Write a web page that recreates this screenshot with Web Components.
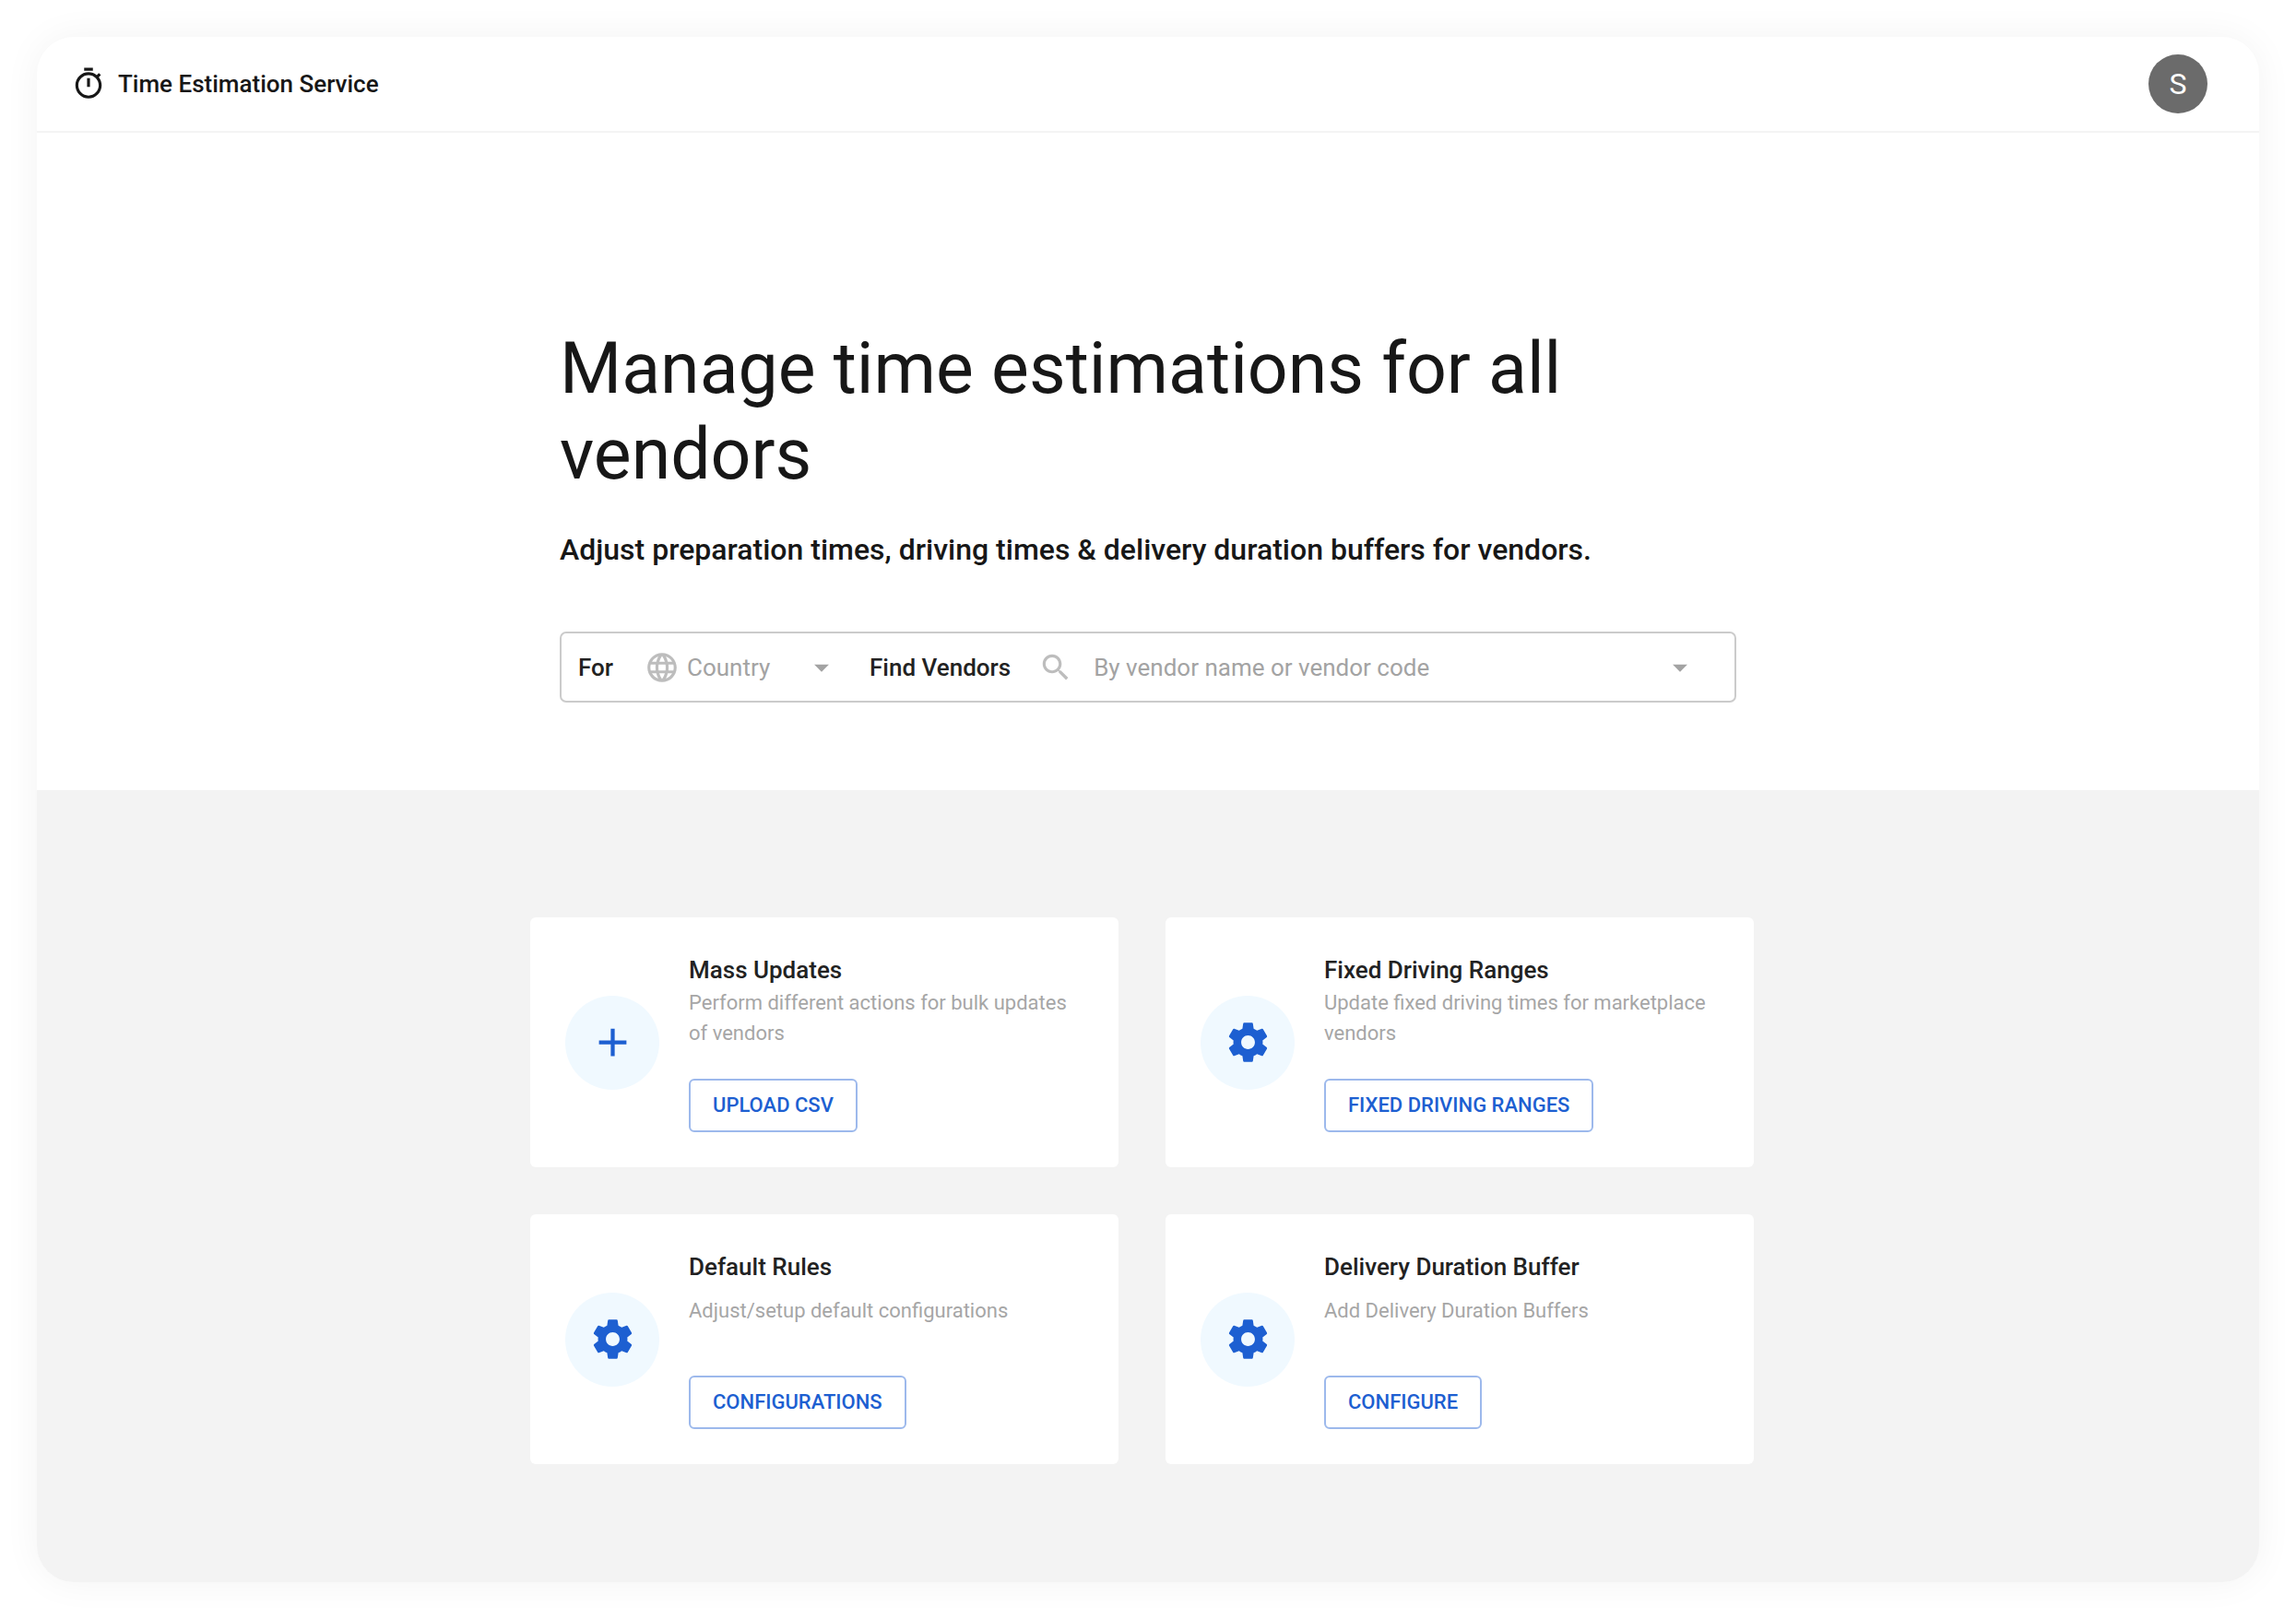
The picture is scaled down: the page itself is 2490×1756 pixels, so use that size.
<!DOCTYPE html>
<html lang="en">
<head>
<meta charset="utf-8">
<title>Time Estimation Service</title>
<style>
  html { background: #fff; }
  body {
    margin: 0;
    padding: 40px;
    font-family: Roboto, "Liberation Sans", sans-serif;
    font-size: 26px;
    color: #171717;
  }
</style>
</head>
<body>
<app-shell>
  <app-header slot="header" initial="S">Time Estimation Service</app-header>
  <hero-panel>
    <span slot="title">Manage time estimations for all vendors</span>
    <span slot="subtitle">Adjust preparation times, driving times &amp; delivery duration buffers for vendors.</span>
    <vendor-search></vendor-search>
  </hero-panel>
  <action-grid>
    <action-card icon="add" action="UPLOAD CSV">
      <span slot="title">Mass Updates</span>
      Perform different actions for bulk updates of vendors
    </action-card>
    <action-card icon="settings" action="FIXED DRIVING RANGES">
      <span slot="title">Fixed Driving Ranges</span>
      Update fixed driving times for marketplace vendors
    </action-card>
    <action-card icon="settings" action="CONFIGURATIONS" spaced>
      <span slot="title">Default Rules</span>
      Adjust/setup default configurations
    </action-card>
    <action-card icon="settings" action="CONFIGURE" spaced>
      <span slot="title">Delivery Duration Buffer</span>
      Add Delivery Duration Buffers
    </action-card>
  </action-grid>
</app-shell>

<script>
  const ICONS = {
    timer: 'M15 1H9v2h6V1zm-4 13h2V8h-2v6zm8.03-6.61l1.42-1.42c-.43-.51-.9-.99-1.41-1.41l-1.42 1.42C16.07 4.74 14.12 4 12 4c-4.97 0-9 4.03-9 9s4.02 9 9 9 9-4.03 9-9c0-2.12-.74-4.07-1.97-5.61zM12 20c-3.87 0-7-3.13-7-7s3.13-7 7-7 7 3.13 7 7-3.13 7-7 7z',
    globe: 'M11.99 2C6.47 2 2 6.48 2 12s4.47 10 9.99 10C17.52 22 22 17.52 22 12S17.52 2 11.99 2zm6.93 6h-2.95c-.32-1.25-.78-2.45-1.38-3.56 1.84.63 3.37 1.91 4.33 3.56zM12 4.04c.83 1.2 1.48 2.53 1.91 3.96h-3.82c.43-1.43 1.08-2.76 1.91-3.96zM4.26 14C4.1 13.36 4 12.69 4 12s.1-1.36.26-2h3.38c-.08.66-.14 1.32-.14 2s.06 1.34.14 2H4.26zm.82 2h2.95c.32 1.25.78 2.45 1.38 3.56-1.84-.63-3.37-1.9-4.33-3.56zm2.95-8H5.08c.96-1.66 2.49-2.93 4.33-3.56C8.81 5.55 8.35 6.75 8.03 8zM12 19.96c-.83-1.2-1.48-2.53-1.91-3.96h3.82c-.43 1.43-1.08 2.76-1.91 3.96zM14.34 14H9.66c-.09-.66-.16-1.32-.16-2s.07-1.35.16-2h4.68c.09.65.16 1.32.16 2s-.07 1.34-.16 2zm.25 5.56c.6-1.11 1.06-2.31 1.38-3.56h2.95c-.96 1.65-2.49 2.93-4.33 3.56zM16.36 14c.08-.66.14-1.32.14-2s-.06-1.34-.14-2h3.38c.16.64.26 1.31.26 2s-.1 1.36-.26 2h-3.38z',
    search: 'M15.5 14h-.79l-.28-.27C15.41 12.59 16 11.11 16 9.5 16 5.91 13.09 3 9.5 3S3 5.91 3 9.5 5.91 16 9.5 16c1.61 0 3.09-.59 4.23-1.57l.27.28v.79l5 4.99L20.49 19l-4.99-5zm-6 0C7.01 14 5 11.99 5 9.5S7.01 5 9.5 5 14 7.01 14 9.5 11.99 14 9.5 14z',
    dropdown: 'M7 10l5 5 5-5z',
    add: 'M19 13h-6v6h-2v-6H5v-2h6V5h2v6h6v2z',
    settings: 'M19.43 12.98c.04-.32.07-.64.07-.98s-.03-.66-.07-.98l2.11-1.65c.19-.15.24-.42.12-.64l-2-3.46c-.12-.22-.39-.3-.61-.22l-2.49 1c-.52-.4-1.08-.73-1.69-.98l-.38-2.65C14.46 2.18 14.25 2 14 2h-4c-.25 0-.46.18-.49.42l-.38 2.65c-.61.25-1.17.59-1.69.98l-2.49-1c-.23-.09-.49 0-.61.22l-2 3.46c-.13.22-.07.49.12.64l2.11 1.65c-.04.32-.07.65-.07.98s.03.66.07.98l-2.11 1.65c-.19.15-.24.42-.12.64l2 3.46c.12.22.39.3.61.22l2.49-1c.52.4 1.08.73 1.69.98l.38 2.65c.03.24.24.42.49.42h4c.25 0 .46-.18.49-.42l.38-2.65c.61-.25 1.17-.59 1.69-.98l2.49 1c.23.09.49 0 .61-.22l2-3.46c.12-.22.07-.49-.12-.64l-2.11-1.65zM12 15.5c-1.93 0-3.5-1.57-3.5-3.5s1.57-3.5 3.5-3.5 3.5 1.57 3.5 3.5-1.57 3.5-3.5 3.5z'
  };

  const define = (name, render) => customElements.define(name, class extends HTMLElement {
    constructor() {
      super();
      this.attachShadow({ mode: 'open' });
    }
    connectedCallback() {
      this.shadowRoot.innerHTML = render(this);
    }
  });

  define('md-icon', el => `
    <style>
      :host { display: block; flex: none; width: 38px; height: 38px; }
      svg { display: block; width: 100%; height: 100%; fill: currentColor; }
    </style>
    <svg viewBox="0 0 24 24" aria-hidden="true"><path d="${ICONS[el.getAttribute('name')]}"/></svg>`);

  define('app-shell', () => `
    <style>
      :host {
        display: flex;
        flex-direction: column;
        min-height: calc(100vh - 80px);
        border-radius: 40px;
        overflow: hidden;
        background: #fff;
        box-shadow: 0 0 40px rgba(0, 0, 0, .05);
      }
      main { flex: 1; display: flex; flex-direction: column; }
    </style>
    <slot name="header"></slot>
    <main><slot></slot></main>`);

  define('app-header', el => `
    <style>
      :host { display: block; border-bottom: 2px solid #f4f4f4; }
      header {
        display: flex;
        align-items: center;
        gap: 13px;
        padding: 19px 56px 19px 37px;
      }
      .name { flex: 1; font-weight: 500; line-height: 38px; }
      button {
        width: 64px;
        height: 64px;
        padding: 0;
        border: 0;
        border-radius: 50%;
        background: #6b6b6b;
        color: #fff;
        font: 400 32px/64px Roboto, "Liberation Sans", sans-serif;
      }
    </style>
    <header>
      <md-icon name="timer"></md-icon>
      <span class="name"><slot></slot></span>
      <button type="button" aria-label="Account">${el.getAttribute('initial')}</button>
    </header>`);

  define('hero-panel', () => `
    <style>
      :host { display: block; padding: 210px 40px 95px; }
      .content { max-width: 1276px; margin: 0 auto; }
      h1 { margin: 0 0 31px; font-weight: 400; font-size: 77px; line-height: 93px; }
      p { margin: 0 0 64px; font-weight: 500; font-size: 32px; line-height: 50px; }
    </style>
    <div class="content">
      <h1><slot name="title"></slot></h1>
      <p><slot name="subtitle"></slot></p>
      <slot></slot>
    </div>`);

  define('vendor-search', () => `
    <style>
      :host { display: block; }
      form {
        display: flex;
        align-items: center;
        box-sizing: border-box;
        height: 77px;
        padding: 0 40px 0 18px;
        border: 2px solid #cbcbcb;
        border-radius: 7px;
      }
      label { flex: none; font-weight: 500; line-height: 38px; color: #222; white-space: nowrap; }
      .field { display: flex; align-items: center; color: #bdbdbd; }
      .country { flex: none; gap: 8px; margin: 0 33px 0 34px; }
      .vendor { flex: 1; gap: 22px; margin-left: 30px; min-width: 0; }
      .select { display: grid; grid-template-columns: 127px 38px; align-items: center; }
      select { grid-area: 1 / 1 / 2 / 3; appearance: none; }
      .select md-icon { grid-area: 1 / 2; pointer-events: none; }
      select, input {
        width: 100%;
        height: 38px;
        min-width: 0;
        margin: 0;
        padding: 0;
        border: 0;
        outline: 0;
        background: none;
        color: #a3a3a3;
        font: inherit;
      }
      input { flex: 1; }
      input::placeholder { color: #a3a3a3; opacity: 1; }
      button { flex: none; padding: 0; border: 0; background: none; color: inherit; }
      .arrow { color: #a3a3a3; }
    </style>
    <form>
      <label for="country">For</label>
      <div class="field country">
        <md-icon name="globe"></md-icon>
        <div class="select">
          <select id="country"><option>Country</option></select>
          <md-icon class="arrow" name="dropdown"></md-icon>
        </div>
      </div>
      <label for="vendor">Find Vendors</label>
      <div class="field vendor">
        <md-icon name="search"></md-icon>
        <input id="vendor" type="text" placeholder="By vendor name or vendor code">
        <button type="button" class="arrow" aria-label="Show vendors"><md-icon name="dropdown"></md-icon></button>
      </div>
    </form>`);

  define('action-grid', () => `
    <style>
      :host { display: block; flex: 1; padding: 138px 40px 128px; background: #f3f3f3; }
      .grid {
        display: grid;
        grid-template-columns: 1fr 1fr;
        gap: 51px;
        box-sizing: border-box;
        max-width: 1340px;
        margin: 0 auto;
        padding-right: 13px;
      }
    </style>
    <div class="grid"><slot></slot></div>`);

  define('action-card', el => `
    <style>
      :host { display: block; border-radius: 6px; background: #fff; }
      article { display: flex; align-items: center; gap: 32px; padding: 38px; }
      .badge {
        flex: none;
        display: grid;
        place-items: center;
        width: 102px;
        height: 102px;
        border-radius: 50%;
        background: #f0f9ff;
        color: #1d5fd1;
      }
      .badge md-icon { width: 51px; height: 51px; }
      .body { flex: 1; min-width: 0; }
      h2 { margin: 0; font-weight: 500; font-size: 26px; line-height: 38px; color: #222; }
      p {
        box-sizing: border-box;
        min-height: 67px;
        margin: 0 0 32px;
        font-size: 22px;
        line-height: 33px;
        color: #a6a6a6;
      }
      :host([spaced]) p { padding-top: 12px; }
      button {
        display: block;
        height: 58px;
        padding: 0 24px;
        border: 2px solid #9db9ec;
        border-radius: 6px;
        background: #fff;
        color: #1d5fd1;
        font: 500 22px/38px Roboto, "Liberation Sans", sans-serif;
      }
    </style>
    <article>
      <div class="badge"><md-icon name="${el.getAttribute('icon')}"></md-icon></div>
      <div class="body">
        <h2><slot name="title"></slot></h2>
        <p><slot></slot></p>
        <button type="button">${el.getAttribute('action')}</button>
      </div>
    </article>`);
</script>
</body>
</html>
